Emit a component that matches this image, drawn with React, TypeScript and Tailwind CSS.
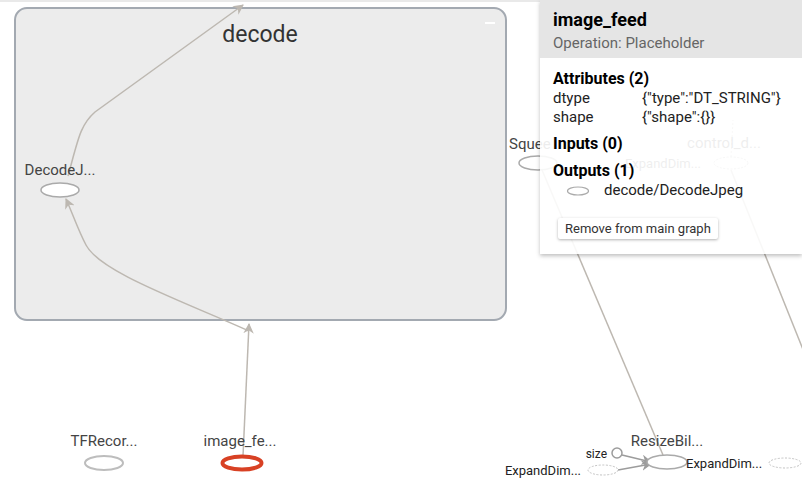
const FONT = "font-['Roboto','Liberation_Sans',sans-serif]";

function Graph() {
  return (
    <svg
      className="absolute inset-0"
      width={802}
      height={500}
      viewBox="0 0 802 500"
      fontFamily="Roboto, 'Liberation Sans', sans-serif"
    >
      <defs>
        <marker id="arr" viewBox="0 0 10 10" refX="9" refY="5" markerWidth="7" markerHeight="7" orient="auto">
          <path d="M0 0 L10 5 L0 10 L3 5 z" fill="#bdb8b1" />
        </marker>
        <marker id="arrDark" viewBox="0 0 10 10" refX="9" refY="5" markerWidth="7" markerHeight="7" orient="auto">
          <path d="M0 0 L10 5 L0 10 L3 5 z" fill="#9c9c9c" />
        </marker>
      </defs>

      <rect x={0} y={0} width={802} height={2} fill="#e9e9e9" />

      {/* decode group */}
      <rect x={15} y={8} width={491} height={312} rx={12} fill="#ececec" stroke="#a3a9b1" strokeWidth={2} />
      <text x={260} y={42} fontSize={23} textAnchor="middle" fill="#333">decode</text>
      <line x1={485} y1={23} x2={495} y2={23} stroke="#fff" strokeWidth={2} />

      {/* edges */}
      <path d="M68 176 C78 140 80 125 95 112 L243 5" fill="none" stroke="#bdb8b1" strokeWidth={1.5} markerEnd="url(#arr)" />
      <path d="M243 456 L249 324" fill="none" stroke="#bdb8b1" strokeWidth={1.5} markerEnd="url(#arr)" />
      <path d="M249 331 C180 300 100 272 86 245 C78 230 72 212 66 199" fill="none" stroke="#bdb8b1" strokeWidth={1.5} markerEnd="url(#arr)" />
      <line x1={542} y1={170} x2={663} y2={455} stroke="#bdb8b1" strokeWidth={1.5} />
      <line x1={731} y1={170} x2={812} y2={372} stroke="#bdb8b1" strokeWidth={1.5} />
      <line x1={731} y1={157} x2={733} y2={120} stroke="#bdb8b1" strokeWidth={1} strokeDasharray="2 2" />

      {/* nodes */}
      <text x={60} y={175} fontSize={15} textAnchor="middle" fill="#444">DecodeJ...</text>
      <ellipse cx={60} cy={190} rx={19} ry={7} fill="#fff" stroke="#aaa" strokeWidth={1.5} />

      <text x={509} y={149} fontSize={15} fill="#444">Squee</text>
      <ellipse cx={538} cy={163} rx={19} ry={7} fill="#fff" stroke="#aaa" strokeWidth={1.5} />

      <text x={724} y={148} fontSize={15} textAnchor="middle" fill="#555">control_d...</text>
      <ellipse cx={731} cy={163} rx={17} ry={6} fill="#fff" stroke="#aaa" strokeWidth={1} strokeDasharray="2 1.5" />
      <text x={663} y={168} fontSize={13} textAnchor="middle" fill="#555">ExpandDim...</text>

      <text x={104} y={446} fontSize={15} textAnchor="middle" fill="#444">TFRecor...</text>
      <ellipse cx={104} cy={463} rx={19} ry={7} fill="#fff" stroke="#bdbdbd" strokeWidth={2} />

      <text x={240} y={446} fontSize={15} textAnchor="middle" fill="#444">image_fe...</text>
      <ellipse cx={242} cy={463} rx={19.5} ry={6.5} fill="#fff" stroke="#d84124" strokeWidth={4} />

      <text x={667} y={446} fontSize={15} textAnchor="middle" fill="#444">ResizeBil...</text>
      <path d="M622 455 L651 462" fill="none" stroke="#9c9c9c" strokeWidth={1.5} markerEnd="url(#arrDark)" />
      <path d="M618 470 L651 464" fill="none" stroke="#9c9c9c" strokeWidth={1.5} markerEnd="url(#arrDark)" />
      <ellipse cx={667} cy={462} rx={20} ry={7} fill="#fff" stroke="#aaa" strokeWidth={1.5} />

      <text x={607} y={458} fontSize={12} textAnchor="end" fill="#222">size</text>
      <circle cx={617} cy={453} r={5} fill="#fff" stroke="#9c9c9c" strokeWidth={1.5} />

      <text x={581} y={475} fontSize={13} textAnchor="end" fill="#222">ExpandDim...</text>
      <ellipse cx={603} cy={470} rx={15} ry={5} fill="#fff" stroke="#c4c4c4" strokeWidth={1} strokeDasharray="2 1.5" />

      <text x={686} y={468} fontSize={13} fill="#222">ExpandDim...</text>
      <ellipse cx={785} cy={463} rx={16} ry={5} fill="#fff" stroke="#c4c4c4" strokeWidth={1} strokeDasharray="2 1.5" />
    </svg>
  );
}

function InfoCard() {
  return (
    <div className={`absolute top-0 right-0 w-[262px] bg-white/90 shadow-[0_2px_4px_rgba(0,0,0,0.25)] ${FONT}`}>
      <div className="bg-[#e2e2e2]/90 pl-[13px] pt-[9px] pb-[5px]">
        <div className="text-[18px] leading-[22px] font-bold text-black">image_feed</div>
        <div className="mt-[2px] text-[15px] leading-[20px] text-[#666]">Operation: Placeholder</div>
      </div>
      <div className="pl-[13px] pt-[11px] pb-[14px] text-[15px] text-[#222]">
        <div className="text-[16px] leading-[20px] font-bold text-black">Attributes (2)</div>
        <div className="grid grid-cols-[89px_1fr] leading-[19px]">
          <span>dtype</span>
          <span>{'{"type":"DT_STRING"}'}</span>
          <span>shape</span>
          <span>{'{"shape":{}}'}</span>
        </div>
        <div className="mt-[7px] text-[16px] leading-[20px] font-bold text-black">Inputs (0)</div>
        <div className="mt-[7px] text-[16px] leading-[20px] font-bold text-black">Outputs (1)</div>
        <div className="flex items-center gap-[14px] pl-[13px] leading-[19px]">
          <svg width={24} height={10} viewBox="0 0 24 10">
            <ellipse cx={12} cy={5} rx={10.5} ry={4} fill="#fff" stroke="#aaa" strokeWidth={1.2} />
          </svg>
          <span>decode/DecodeJpeg</span>
        </div>
        <button
          type="button"
          className="mt-[18px] ml-[5px] h-[21px] px-[7px] rounded-[2px] bg-white text-[13px] leading-[21px] text-[#333] shadow-[0_1px_3px_rgba(0,0,0,0.3)]"
        >
          Remove from main graph
        </button>
      </div>
    </div>
  );
}

export default function App() {
  return (
    <div className={`relative w-[802px] h-[500px] overflow-hidden bg-white ${FONT}`}>
      <Graph />
      <InfoCard />
    </div>
  );
}
